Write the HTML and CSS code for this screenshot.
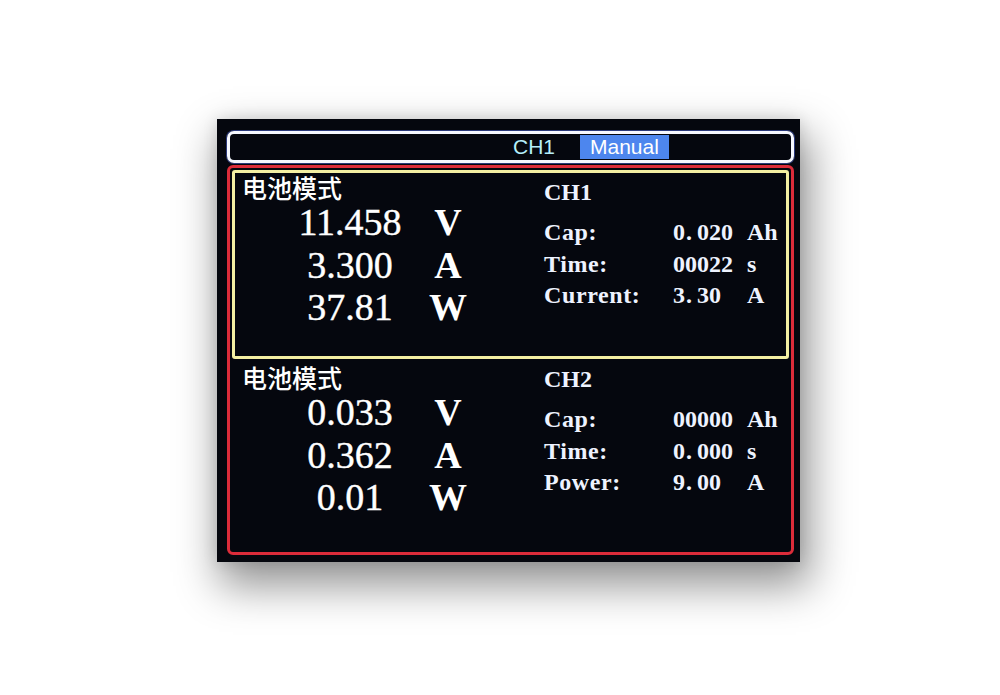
FILE: index.html
```html
<!DOCTYPE html>
<html>
<head>
<meta charset="utf-8">
<link rel="stylesheet" href="styles.css">
</head>
<body>
<div class="stage">
  <div class="screen">
    <div class="titlebar"><span class="tb-ch">CH1</span><span class="tb-mode">Manual</span></div>
    <div class="frame">
      <section class="chan chan--active">
        <div class="readout">
          <div class="mode">电池模式</div>
          <div class="meas">
            <span class="val">11.458</span><span class="unit">V</span>
            <span class="val">3.300</span><span class="unit">A</span>
            <span class="val">37.81</span><span class="unit">W</span>
          </div>
        </div>
        <div class="info">
          <div class="info-title">CH1</div>
          <div class="info-grid">
            <span class="lbl">Cap:</span><span class="num">0<span class="pt">.</span>020</span><span class="u">Ah</span>
            <span class="lbl">Time:</span><span class="num">00022</span><span class="u">s</span>
            <span class="lbl">Current:</span><span class="num">3<span class="pt">.</span>30</span><span class="u">A</span>
          </div>
        </div>
      </section>
      <section class="chan chan--second">
        <div class="readout">
          <div class="mode">电池模式</div>
          <div class="meas">
            <span class="val">0.033</span><span class="unit">V</span>
            <span class="val">0.362</span><span class="unit">A</span>
            <span class="val">0.01</span><span class="unit">W</span>
          </div>
        </div>
        <div class="info info--ch2">
          <div class="info-title">CH2</div>
          <div class="info-grid">
            <span class="lbl">Cap:</span><span class="num">00000</span><span class="u">Ah</span>
            <span class="lbl">Time:</span><span class="num">0<span class="pt">.</span>000</span><span class="u">s</span>
            <span class="lbl">Power:</span><span class="num">9<span class="pt">.</span>00</span><span class="u">A</span>
          </div>
        </div>
      </section>
    </div>
  </div>
</div>
</body>
</html>
```

FILE: styles.css
```css
html,
body {
  margin: 0;
  background: #ffffff;
}

body {
  min-height: 695px;
}

.stage {
  padding: 119px 0 0 217px;
  min-height: 695px;
  box-sizing: border-box;
}

.screen {
  width: 583px;
  height: 443px;
  box-sizing: border-box;
  background: #05070e;
  padding: 12px 6px 0 10px;
  box-shadow: 6px 20px 40px 4px rgba(0, 0, 0, 0.42), 0 0 14px rgba(0, 0, 0, 0.12);
}

.titlebar {
  height: 32px;
  box-sizing: border-box;
  border: 3px solid #f6f8ff;
  border-radius: 7px;
  box-shadow: 0 0 0 1px rgba(90, 120, 255, 0.45);
  display: flex;
  align-items: center;
  padding-left: 283px;
  font-family: "Liberation Sans", Arial, sans-serif;
  font-size: 21px;
}

.tb-ch {
  color: #b4eefa;
  margin-right: 25px;
}

.tb-mode {
  background: #4d86ee;
  color: #ffffff;
  height: 24px;
  line-height: 24px;
  padding: 0 10px;
}

.frame {
  margin-top: 2px;
  height: 390px;
  box-sizing: border-box;
  border: 3px solid #dc2c3a;
  border-radius: 6px;
  padding: 2px 2px 0 2px;
}

.chan {
  height: 189px;
  box-sizing: border-box;
  border: 3px solid transparent;
  border-radius: 3px;
  display: flex;
}

.chan--active {
  border-color: #f3efa2;
}

.chan--second {
  margin-top: 1px;
}

.readout {
  width: 309px;
  color: #ffffff;
}

.mode {
  font-family: "Noto Sans CJK SC", sans-serif;
  font-weight: 500;
  font-size: 25px;
  line-height: 27px;
  padding: 1px 0 0 7px;
}

.meas {
  display: grid;
  grid-template-columns: 130px 66px;
  margin-left: 50px;
  font-family: "Liberation Serif", "Times New Roman", serif;
  font-size: 38px;
  line-height: 42.5px;
}

.val {
  text-align: center;
  -webkit-text-stroke: 0.4px #ffffff;
}

.unit {
  text-align: center;
  font-weight: bold;
}

.info {
  padding-top: 3px;
  color: #eef3ff;
  font-family: "Liberation Serif", "Times New Roman", serif;
  font-weight: bold;
  font-size: 24px;
}

.info--ch2 {
  padding-top: 0;
}

.info-title {
  line-height: 32px;
  margin-bottom: 9px;
}

.info-grid {
  display: grid;
  grid-template-columns: 129px 74px auto;
  line-height: 31.5px;
}

.lbl {
  letter-spacing: 0.6px;
}

.pt {
  display: inline-block;
  width: 12px;
  text-align: left;
  padding-left: 1px;
  box-sizing: border-box;
}
```
